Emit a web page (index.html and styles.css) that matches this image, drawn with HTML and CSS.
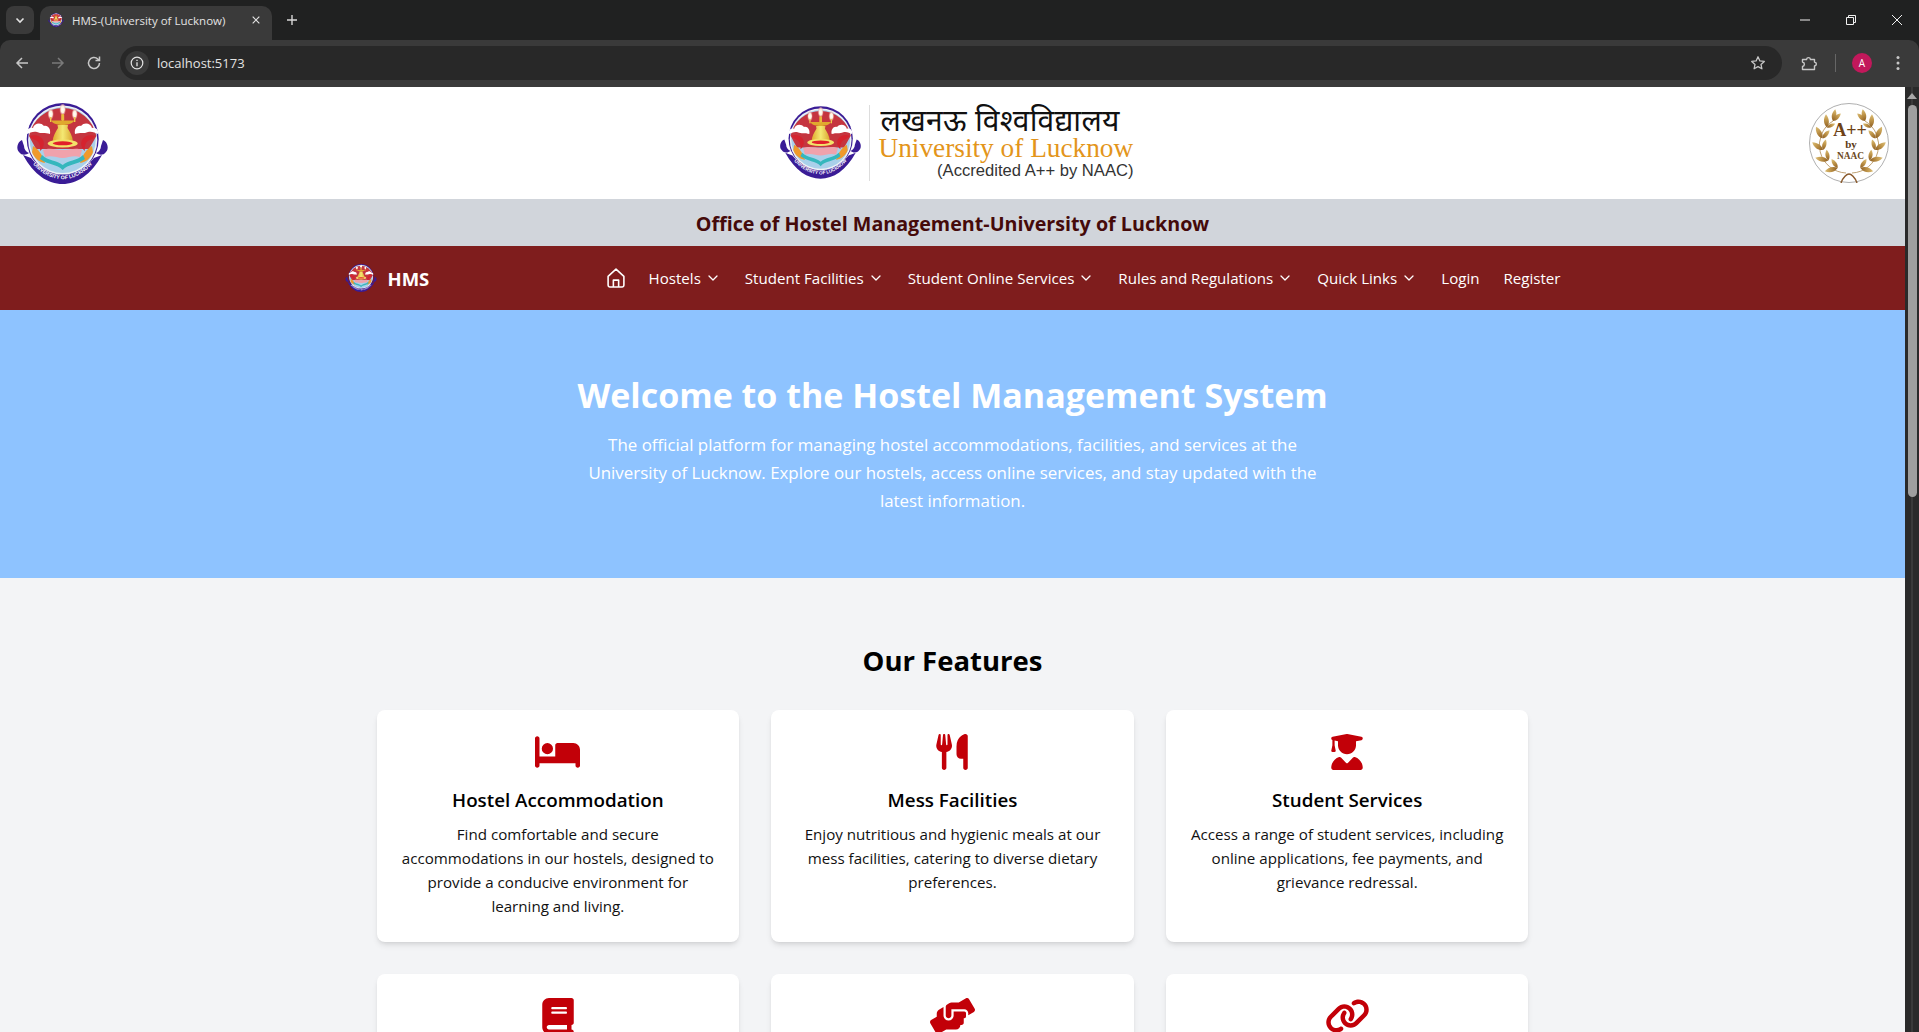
FILE: index.html
```html
<!DOCTYPE html>
<html lang="en">
<head>
<meta charset="utf-8">
<title>HMS-(University of Lucknow)</title>
<link rel="stylesheet" href="styles.css">
</head>
<body>
<svg class="defs" width="0" height="0" aria-hidden="true">
  <defs>
    <linearGradient id="gold" x1="0" y1="0" x2="1" y2="0">
      <stop offset="0" stop-color="#8f5f22"/>
      <stop offset=".6" stop-color="#c39a4e"/>
      <stop offset="1" stop-color="#dcc07a"/>
    </linearGradient>
    <linearGradient id="bell" x1="0" y1="0" x2="1" y2="0">
      <stop offset="0" stop-color="#e0a92e"/>
      <stop offset=".5" stop-color="#f4e873"/>
      <stop offset="1" stop-color="#d9a52e"/>
    </linearGradient>
    <radialGradient id="flame">
      <stop offset="0" stop-color="#ffffff"/>
      <stop offset=".55" stop-color="#fff0dc"/>
      <stop offset="1" stop-color="#e9939a" stop-opacity=".3"/>
    </radialGradient>
    <path id="ribbonArc" d="M11 54 C22 69 34 76.200 46.500 76.200 C59 76.200 71 69 82 54"/>
    <path id="leaf" d="M0 0 C3 -3.200 8 -3.600 12 -.8 C8 2.400 3 2.600 0 0 Z" fill="url(#gold)"/>
    <symbol id="emblem" viewBox="0 0 93 81">
      <circle cx="46.700" cy="36" r="36" fill="#3a1c96"/>
      <circle cx="46.700" cy="37" r="34.600" fill="#eef2f6"/>
      <circle cx="46.700" cy="37" r="33" fill="#a9d0ea"/>
      <path d="M13 33 A34.300 34.300 0 0 1 80.400 33 L73 46 H20 Z" fill="#c5353f"/>
      <path d="M11 31 C10 26 14 24 17 25 C18 20 25 19 28 23 C32 22 35 26 34 31 C29 29 25 31 21 29 C17 28 14 30 11 31 Z" fill="#fff"/>
      <path d="M82 31 C83 26 79 24 76 25 C75 20 68 19 65 23 C61 22 58 26 59 31 C64 29 68 31 72 29 C76 28 79 30 82 31 Z" fill="#fff"/>
      <path d="M14 33 C19 31 25 33 27 37 C29 41 27 46 24 48 C25 43 23 38 19 37 C17 36 15 35 14 33 Z" fill="#d5232e"/>
      <path d="M79 33 C74 31 68 33 66 37 C64 41 66 46 69 48 C68 43 70 38 74 37 C76 36 78 35 79 33 Z" fill="#d5232e"/>
      <path d="M17 43 C22 46 27 52 29 60 C23 59 18 55 16 49 Z" fill="#ef9a2b"/>
      <path d="M76 43 C71 46 66 52 64 60 C70 59 75 55 77 49 Z" fill="#ef9a2b"/>
      <ellipse cx="34.700" cy="11" rx="3" ry="5.500" fill="url(#flame)"/>
      <ellipse cx="46.700" cy="6.500" rx="3.200" ry="6" fill="url(#flame)"/>
      <ellipse cx="58.700" cy="11" rx="3" ry="5.500" fill="url(#flame)"/>
      <rect x="34" y="14" width="1.400" height="5" fill="#f1c84c"/>
      <rect x="58" y="14" width="1.400" height="5" fill="#f1c84c"/>
      <path d="M35 17.500 H58.500 C56 21 51 22 46.700 22 C42 22 37 21 35 17.500 Z" fill="#e0a92e"/>
      <rect x="45.200" y="11" width="3" height="7" rx="1.400" fill="#e9bb3c"/>
      <path d="M41.500 22 H52 L51.500 25 C54 29 56.500 33 57 39 H36.500 C37 33 39.500 29 42 25 Z" fill="url(#bell)"/>
      <ellipse cx="46.700" cy="40.500" rx="15" ry="4" fill="#f3e26a"/>
      <ellipse cx="46.700" cy="40.300" rx="10" ry="2" fill="#e2202a"/>
      <path d="M27 47 C34 44 41 47 46.700 47 C53 47 60 44 66 47 L64 54 C57 52 52 55 46.700 55 C41 55 36 52 29 54 Z" fill="#f0a2ac"/>
      <path d="M26 52 C32 58 41 57 46.700 62 C52 57 61 58 67 52 L69 56 C61 62 52 61 46.700 67 C41 61 32 62 24 56 Z" fill="#35b7bd"/>
      <path d="M7 52 C18 72 32 81 46.500 81 C61 81 75 72 86 52 L78 55 C68 67 58 72 46.500 72 C35 72 25 67 15 55 Z" fill="#3a1c96"/>
      <path d="M6 37 C1 39 0 46 3 49 C6 53 10 52 13 50 C10 49 8 46 8 43 Z" fill="#3a1c96"/>
      <path d="M87 37 C92 39 93 46 90 49 C87 53 83 52 80 50 C83 49 85 46 85 43 Z" fill="#3a1c96"/>
      <text class="ribbon-text"><textPath href="#ribbonArc" startOffset="50%" text-anchor="middle">UNIVERSITY OF LUCKNOW</textPath></text>
    </symbol>
    <symbol id="bed" viewBox="0 0 640 512"><path d="M32 32c17.700 0 32 14.300 32 32V320H288V160c0-17.700 14.300-32 32-32H544c53 0 96 43 96 96V448c0 17.700-14.300 32-32 32s-32-14.300-32-32V416H352 320 64v32c0 17.700-14.300 32-32 32s-32-14.300-32-32V64C0 46.300 14.300 32 32 32zm144 96a80 80 0 1 1 0 160 80 80 0 1 1 0-160z"/></symbol>
    <symbol id="utensils" viewBox="0 0 448 512"><path d="M416 0C400 0 288 32 288 176V288c0 35.300 28.700 64 64 64h32V480c0 17.700 14.300 32 32 32s32-14.300 32-32V352 240 32c0-17.700-14.300-32-32-32zM64 16C64 7.800 57.900 1 49.700 .1S34.200 4.600 32.400 12.500L2.100 148.800C.7 155.100 0 161.500 0 167.900c0 45.900 35.100 83.600 80 87.700V480c0 17.700 14.300 32 32 32s32-14.300 32-32V255.600c44.900-4.100 80-41.800 80-87.700c0-6.400-.7-12.800-2.100-19.100L191.600 12.500c-1.800-8-9.300-13.300-17.400-12.400S160 7.800 160 16V150.200c0 5.400-4.400 9.800-9.800 9.800c-5.100 0-9.300-3.900-9.800-9L127.900 14.600C127.200 6.300 120.300 0 112 0s-15.200 6.300-15.900 14.600L83.700 151c-.5 5.100-4.700 9-9.800 9c-5.400 0-9.800-4.400-9.800-9.800V16z"/></symbol>
    <symbol id="graduate" viewBox="0 0 448 512"><path d="M219.300 .5c3.100-.6 6.300-.6 9.400 0l200 40C439.900 42.700 448 52.600 448 64s-8.100 21.300-19.300 23.500L352 102.900V160c0 70.700-57.300 128-128 128s-128-57.300-128-128V102.900L48 93.300v65.100l15.700 78.400c.9 4.700-.3 9.600-3.300 13.300s-7.600 5.900-12.400 5.900H16c-4.800 0-9.300-2.100-12.400-5.900s-4.300-8.600-3.300-13.300L16 158.400V86.600C6.500 83.300 0 74.300 0 64C0 52.600 8.100 42.700 19.300 40.500l200-40zM111.900 327.700c10.500-3.400 21.800 .4 29.400 8.500l71 75.500c6.300 6.700 17 6.700 23.300 0l71-75.500c7.600-8.100 18.900-11.900 29.400-8.500C401 348.600 448 409.400 448 481.300c0 17-13.800 30.700-30.700 30.700H30.700C13.800 512 0 498.200 0 481.300c0-71.900 47-132.700 111.900-153.600z"/></symbol>
    <symbol id="book" viewBox="0 0 448 512"><path d="M96 0C43 0 0 43 0 96V416c0 53 43 96 96 96H384h32c17.700 0 32-14.300 32-32s-14.300-32-32-32V384c17.700 0 32-14.300 32-32V32c0-17.700-14.300-32-32-32H384 96zm0 384H352v64H96c-17.700 0-32-14.300-32-32s14.300-32 32-32zm32-240c0-8.800 7.200-16 16-16H336c8.800 0 16 7.200 16 16s-7.200 16-16 16H144c-8.800 0-16-7.200-16-16zm16 48H336c8.800 0 16 7.200 16 16s-7.200 16-16 16H144c-8.800 0-16-7.200-16-16s7.200-16 16-16z"/></symbol>
    <symbol id="helping" viewBox="0 0 640 512"><path d="M488 192H336v56c0 39.700-32.300 72-72 72s-72-32.300-72-72V126.400l-64.900 39C107.800 176.900 96 197.800 96 220.200v47.300l-80 46.200C.7 322.500-4.600 342.100 4.300 357.400l80 138.600c8.800 15.300 28.400 20.500 43.700 11.700L231.400 448H368c35.300 0 64-28.700 64-64h16c17.700 0 32-14.300 32-32v-64h8c13.300 0 24-10.700 24-24v-48c0-13.300-10.700-24-24-24zm147.700-37.400L555.700 16C546.900 .7 527.300-4.500 512 4.300L408.600 64H306.400c-12 0-23.700 3.400-33.900 9.700L239 94.600c-9.400 5.800-15 16.100-15 27.100V248c0 22.100 17.900 40 40 40s40-17.900 40-40v-88h184c30.900 0 56 25.100 56 56v28.500l80-46.200c15.300-8.900 20.500-28.400 11.700-43.700z"/></symbol>
    <symbol id="link" viewBox="0 0 640 512"><path d="M579.800 267.700c56.500-56.500 56.500-148 0-204.500c-50-50-128.800-56.500-186.300-15.400l-1.600 1.100c-14.400 10.300-17.700 30.300-7.400 44.600s30.300 17.700 44.600 7.400l1.600-1.100c32.100-22.900 76-19.300 103.800 8.600c31.500 31.500 31.500 82.500 0 114L422.300 334.800c-31.500 31.500-82.500 31.500-114 0c-27.900-27.900-31.500-71.800-8.600-103.800l1.100-1.600c10.300-14.400 6.900-34.400-7.400-44.600s-34.400-6.900-44.600 7.400l-1.100 1.600C206.500 251.200 213 330 263 380c56.500 56.500 148 56.500 204.500 0L579.800 267.700zM60.200 244.300c-56.500 56.500-56.500 148 0 204.500c50 50 128.800 56.500 186.300 15.400l1.600-1.100c14.400-10.300 17.700-30.300 7.400-44.600s-30.300-17.700-44.600-7.400l-1.600 1.100c-32.100 22.900-76 19.300-103.800-8.600C74 372 74 321 105.500 289.500L217.700 177.200c31.500-31.500 82.500-31.500 114 0c27.900 27.900 31.500 71.800 8.600 103.900l-1.100 1.600c-10.300 14.400-6.900 34.400 7.400 44.600s34.400 6.900 44.600-7.400l1.100-1.600C433.500 260.800 427 182 377 132c-56.500-56.500-148-56.500-204.500 0L60.200 244.300z"/></symbol>
    <symbol id="chev" viewBox="0 0 16 16"><path d="M4 6l4 4 4-4" fill="none" stroke="currentColor" stroke-width="1.300" stroke-linecap="round" stroke-linejoin="round"/></symbol>
  </defs>
</svg>

<div class="app">
  <div class="chrome">
    <div class="tabstrip">
      <div class="tab-search"><svg class="ci12" viewBox="0 0 12 12"><path d="M2.500 4.500L6 8l3.500-3.500" fill="none" stroke="#e3e3e3" stroke-width="1.600"/></svg></div>
      <div class="tab">
        <svg class="favicon"><use href="#emblem"/></svg>
        <span class="tab-title">HMS-(University of Lucknow)</span>
        <svg class="tab-close" viewBox="0 0 12 12"><path d="M2 2l8 8M10 2l-8 8" stroke="#e3e3e3" stroke-width="1.400"/></svg>
      </div>
      <svg class="newtab" viewBox="0 0 12 12"><path d="M6 1v10M1 6h10" stroke="#d8d8d8" stroke-width="1.400"/></svg>
      <div class="winctl">
        <svg class="wc" viewBox="0 0 12 12"><path d="M1 6h10" stroke="#f0f0f0" stroke-width="1"/></svg>
        <svg class="wc" viewBox="0 0 12 12"><path d="M1.500 3.500h7v7h-7zM3.500 3.500v-2h7v7h-2" fill="none" stroke="#f0f0f0" stroke-width="1"/></svg>
        <svg class="wc" viewBox="0 0 12 12"><path d="M1 1l10 10M11 1L1 11" stroke="#f0f0f0" stroke-width="1"/></svg>
      </div>
    </div>
    <div class="toolbar">
      <svg class="tb back" viewBox="0 0 16 16"><path d="M14 8H3M8 3L3 8l5 5" fill="none" stroke="#c7c7c7" stroke-width="1.500"/></svg>
      <svg class="tb fwd" viewBox="0 0 16 16"><path d="M2 8h11M8 3l5 5-5 5" fill="none" stroke="#7a7a7a" stroke-width="1.500"/></svg>
      <svg class="tb reload" viewBox="0 0 16 16"><path d="M13.500 8a5.500 5.500 0 1 1-1.700-4L13.500 5.500M13.500 1.500v4h-4" fill="none" stroke="#c7c7c7" stroke-width="1.500"/></svg>
      <div class="omni">
        <span class="info"><svg class="ci14" viewBox="0 0 14 14"><circle cx="7" cy="7" r="5.800" fill="none" stroke="#e3e3e3" stroke-width="1.200"/><path d="M7 6.200v4M7 3.700v1.300" stroke="#e3e3e3" stroke-width="1.300"/></svg></span>
        <span class="url">localhost:5173</span>
        <svg class="star" viewBox="0 0 16 16"><path d="M8 1.800l1.900 4.100 4.400.5-3.300 3 .9 4.400L8 11.600l-3.900 2.200.9-4.400-3.300-3 4.400-.5z" fill="none" stroke="#c7c7c7" stroke-width="1.300" stroke-linejoin="round"/></svg>
      </div>
      <svg class="ext" viewBox="0 0 18 18"><path d="M2.500 5.500H6.500C7 3 10 3 10.500 5.500H14.500V8C17 8.500 17 11.500 14.500 12V15.500H2.500V12.500C5 12 5 8.500 2.500 8Z" fill="none" stroke="#c7c7c7" stroke-width="1.400" stroke-linejoin="round"/></svg>
      <span class="tb-sep"></span>
      <span class="avatar">A</span>
      <svg class="dots" viewBox="0 0 4 16"><circle cx="2" cy="2.500" r="1.500" fill="#c7c7c7"/><circle cx="2" cy="8" r="1.500" fill="#c7c7c7"/><circle cx="2" cy="13.500" r="1.500" fill="#c7c7c7"/></svg>
    </div>
  </div>

  <div class="viewport">
    <div class="page">
      <header class="brand">
        <svg class="emblem-lg"><use href="#emblem"/></svg>
        <div class="unilogo">
          <svg class="emblem-md"><use href="#emblem"/></svg>
          <span class="unilogo-rule"></span>
          <div class="unilogo-text">
            <span class="uni-hi">लखनऊ विश्वविद्यालय</span>
            <span class="uni-en">University of Lucknow</span>
            <span class="uni-acc">(Accredited A++ by NAAC)</span>
          </div>
        </div>
        <svg class="naac" viewBox="0 0 80 80">
          <circle cx="40" cy="40" r="39.500" fill="#fff" stroke="#9a9a9a" stroke-width=".8"/>
          <g id="laurel">
            <path d="M37 70 A28 28 0 0 1 24 18" fill="none" stroke="#a47a3a" stroke-width=".7"/>
            <use href="#leaf" transform="translate(28.600 65) rotate(170) scale(1.100)"/>
            <use href="#leaf" transform="translate(28.600 65) rotate(240) scale(.9)"/>
            <use href="#leaf" transform="translate(19.300 57.400) rotate(195) scale(1.100)"/>
            <use href="#leaf" transform="translate(19.300 57.400) rotate(265) scale(.9)"/>
            <use href="#leaf" transform="translate(13.900 47) rotate(220) scale(1.100)"/>
            <use href="#leaf" transform="translate(13.900 47) rotate(290) scale(.9)"/>
            <use href="#leaf" transform="translate(13.400 35.300) rotate(245) scale(1.100)"/>
            <use href="#leaf" transform="translate(13.400 35.300) rotate(315) scale(.9)"/>
            <use href="#leaf" transform="translate(17.900 24.500) rotate(270) scale(1.100)"/>
            <use href="#leaf" transform="translate(17.900 24.500) rotate(340) scale(.75)"/>
            <use href="#leaf" transform="translate(24 18) rotate(285) scale(1)"/>
            <use href="#leaf" transform="translate(24 18) rotate(320) scale(.9)"/>
          </g>
          <use href="#laurel" transform="matrix(-1 0 0 1 80 0)"/>
          <path d="M32 80 C34 74 38 71 40 71 C42 71 46 74 48 80" fill="none" stroke="#8a5a2c" stroke-width="1.500"/>
          <text class="naac-a" x="41" y="33" text-anchor="middle">A++</text>
          <text class="naac-by" x="42" y="45" text-anchor="middle">by</text>
          <text class="naac-n" x="41.500" y="56" text-anchor="middle">NAAC</text>
        </svg>
      </header>

      <div class="office">Office of Hostel Management-University of Lucknow</div>

      <nav class="nav">
        <div class="nav-inner">
          <div class="nav-brand">
            <svg class="nav-logo"><use href="#emblem"/></svg>
            <span class="nav-name">HMS</span>
          </div>
          <div class="nav-links">
            <svg class="home" viewBox="0 0 17 19"><path d="M1 8L8.500 1 16 8v8.500a1.500 1.500 0 0 1-1.500 1.500h-12A1.500 1.500 0 0 1 1 16.500zM6 18v-6.500h5V18" fill="none" stroke="#fff" stroke-width="1.500" stroke-linejoin="round"/></svg>
            <a class="nav-item">Hostels <svg class="chev"><use href="#chev"/></svg></a>
            <a class="nav-item">Student Facilities <svg class="chev"><use href="#chev"/></svg></a>
            <a class="nav-item">Student Online Services <svg class="chev"><use href="#chev"/></svg></a>
            <a class="nav-item">Rules and Regulations <svg class="chev"><use href="#chev"/></svg></a>
            <a class="nav-item">Quick Links <svg class="chev"><use href="#chev"/></svg></a>
            <a class="nav-item">Login</a>
            <a class="nav-item">Register</a>
          </div>
        </div>
      </nav>

      <section class="hero">
        <h1>Welcome to the Hostel Management System</h1>
        <p>The official platform for managing hostel accommodations, facilities, and services at the<br>University of Lucknow. Explore our hostels, access online services, and stay updated with the<br>latest information.</p>
      </section>

      <section class="features">
        <h2>Our Features</h2>
        <div class="grid">
          <article class="card">
            <svg class="icon icon-wide"><use href="#bed"/></svg>
            <h3>Hostel Accommodation</h3>
            <p>Find comfortable and secure<br>accommodations in our hostels, designed to<br>provide a conducive environment for<br>learning and living.</p>
          </article>
          <article class="card">
            <svg class="icon icon-narrow"><use href="#utensils"/></svg>
            <h3>Mess Facilities</h3>
            <p>Enjoy nutritious and hygienic meals at our<br>mess facilities, catering to diverse dietary<br>preferences.</p>
          </article>
          <article class="card">
            <svg class="icon icon-narrow"><use href="#graduate"/></svg>
            <h3>Student Services</h3>
            <p>Access a range of student services, including<br>online applications, fee payments, and<br>grievance redressal.</p>
          </article>
          <article class="card">
            <svg class="icon icon-narrow"><use href="#book"/></svg>
          </article>
          <article class="card">
            <svg class="icon icon-wide"><use href="#helping"/></svg>
          </article>
          <article class="card">
            <svg class="icon icon-wide"><use href="#link"/></svg>
          </article>
        </div>
      </section>
    </div>
    <div class="scrollbar">
      <span class="sb-up"></span>
      <span class="sb-thumb"></span>
    </div>
  </div>
</div>
</body>
</html>
```
FILE: styles.css
```css
* { box-sizing: border-box; }
html, body { margin: 0; height: 100%; overflow: hidden; }
body { font-family: "Open Sans", "Noto Sans", "Liberation Sans", sans-serif; background: #fff; color: #000; }
.defs { position: absolute; }
.app { height: 100vh; display: flex; flex-direction: column; }

/* browser chrome */
.chrome { flex: none; background: #202121; }
.tabstrip { height: 40px; display: flex; align-items: flex-end; padding-left: 6px; }
.tab-search { width: 28px; height: 28px; margin-bottom: 6px; border-radius: 8px; background: #3a3a3a; display: flex; align-items: center; justify-content: center; }
.ci12 { width: 12px; height: 12px; }
.tab { width: 232px; height: 34px; margin-left: 6px; background: #3a3a3a; border-radius: 10px 10px 0 0; display: flex; align-items: center; padding: 0 8px 6px 8px; }
.favicon { width: 16px; height: 14px; flex: none; }
.tab-title { margin-left: 8px; flex: 1; font-size: 11.500px; color: #e3e3e3; white-space: nowrap; }
.tab-close { width: 10px; height: 10px; margin-right: 3px; }
.newtab { width: 12px; height: 12px; margin: 0 0 14px 14px; }
.winctl { margin-left: auto; align-self: stretch; display: flex; gap: 34px; align-items: center; padding-right: 16px; }
.wc { width: 12px; height: 12px; }
.toolbar { height: 47px; background: #3a3a3a; border-radius: 10px 10px 0 0; display: flex; align-items: center; padding: 0 0 2px 14px; }
.tb { width: 16px; height: 16px; flex: none; margin-right: 20px; }
.omni { flex: none; margin-left: -2px; width: 1662px; height: 34px; border-radius: 17px; background: #282828; display: flex; align-items: center; padding: 0 16px 0 5px; }
.info { width: 24px; height: 24px; border-radius: 50%; background: #3a3a3a; display: flex; align-items: center; justify-content: center; }
.ci14 { width: 14px; height: 14px; }
.url { margin-left: 8px; font-size: 13px; color: #e3e3e3; }
.star { width: 16px; height: 16px; margin-left: auto; }
.ext { width: 18px; height: 18px; margin-left: 18px; flex: none; }
.tb-sep { width: 1px; height: 18px; background: #666; margin-left: 17px; flex: none; }
.avatar { width: 20px; height: 20px; border-radius: 50%; background: #c2185b; color: #fff; font-size: 10px; display: flex; align-items: center; justify-content: center; margin-left: 16px; flex: none; }
.dots { width: 4px; height: 16px; margin-left: 24px; flex: none; }

/* viewport */
.viewport { flex: 1; min-height: 0; display: flex; }
.page { flex: 1; min-width: 0; overflow: hidden; background: #f3f4f6; }
.scrollbar { width: 14px; flex: none; background: linear-gradient(90deg, #2a2a2a 0 6px, #3a3a3a 6px 8px, #2a2a2a 8px); position: relative; }
.sb-up { display: block; width: 0; margin: 6px auto 0; border-left: 5px solid transparent; border-right: 5px solid transparent; border-bottom: 6px solid #a8a8a8; }
.sb-thumb { display: block; width: 9px; height: 392px; margin: 6px 0 0 3px; border-radius: 5px; background: #9f9f9f; }

/* brand header */
.brand { height: 112px; background: #fff; display: flex; align-items: center; justify-content: space-between; padding: 0 16px; }
.emblem-lg { width: 93px; height: 81px; flex: none; }
.unilogo { display: flex; align-items: stretch; height: 76px; margin-right: 6px; }
.emblem-md { width: 83px; height: 75px; flex: none; }
.unilogo-rule { width: 1px; background: #ddd; margin: 0 9px 0 7px; }
.unilogo-text { display: flex; flex-direction: column; width: 255px; }
.uni-hi { height: 31px; line-height: 30px; padding-left: 2px; font-family: "Noto Sans", "Liberation Serif", serif; font-size: 30px; letter-spacing: .3px; color: #111; white-space: nowrap; }
.uni-en { height: 25px; line-height: 24px; font-family: "Liberation Serif", serif; font-size: 27.300px; color: #e3951b; white-space: nowrap; }
.uni-acc { height: 20px; line-height: 20px; font-family: "Liberation Sans", sans-serif; font-size: 16.600px; color: #333; text-align: right; white-space: nowrap; }
.naac { width: 80px; height: 80px; flex: none; }
.naac-a { font: bold 18px "Liberation Serif", serif; fill: #6e4216; }
.naac-by { font: bold 11px "Liberation Serif", serif; fill: #5c3a16; }
.naac-n { font: bold 9.400px "Liberation Serif", serif; fill: #6e4a1e; }
.ribbon-text { font: bold 5.200px "Liberation Sans", sans-serif; fill: #fff; }

/* office bar */
.office { height: 47px; padding-top: 1px; background: #d1d5db; color: #450a0a; display: flex; align-items: center; justify-content: center; font-size: 19.700px; font-weight: 700; }

/* nav */
.nav { height: 64px; background: #7f1d1d; color: #fff; }
.nav-inner { max-width: 1280px; height: 100%; margin: 0 auto; padding: 0 32px; display: flex; align-items: center; justify-content: space-between; }
.nav-brand { display: flex; align-items: center; gap: 11px; }
.nav-logo { width: 32px; height: 32px; }
.nav-name { font-size: 18.500px; font-weight: 700; }
.nav-links { display: flex; align-items: center; gap: 24px; font-size: 15.100px; }
.nav-item { display: flex; align-items: center; gap: 4px; white-space: nowrap; }
.home { width: 18px; height: 20px; }
.chev { width: 16px; height: 16px; }

/* hero */
.hero { background: #8ec3ff; color: #fff; text-align: center; padding: 65px 0 63px; }
.hero h1 { margin: 0 0 16px; font-size: 34px; line-height: 40px; font-weight: 700; }
.hero p { margin: 0; font-size: 16.900px; line-height: 28px; }

/* features */
.features { padding: 65px 0 64px; }
.features h2 { margin: 0 0 31px; text-align: center; font-size: 27.500px; line-height: 36px; font-weight: 700; }
.grid { width: 1152px; margin: 0 auto; display: grid; grid-template-columns: repeat(3, 1fr); gap: 32px; }
.card { background: #fff; border-radius: 8px; padding: 24px 24px 23px; text-align: center; box-shadow: 0 4px 6px -1px rgba(0,0,0,.1), 0 2px 4px -2px rgba(0,0,0,.1); min-height: 232px; }
.card h3 { margin: 1px 0 8px; font-size: 18.800px; line-height: 28px; font-weight: 600; }
.card p { margin: 0; font-size: 15.150px; line-height: 24px; color: #111; }
.icon { display: block; height: 36px; margin: 0 auto 16px; fill: #c20008; }
.icon-wide { width: 45px; }
.icon-narrow { width: 32px; }
```
